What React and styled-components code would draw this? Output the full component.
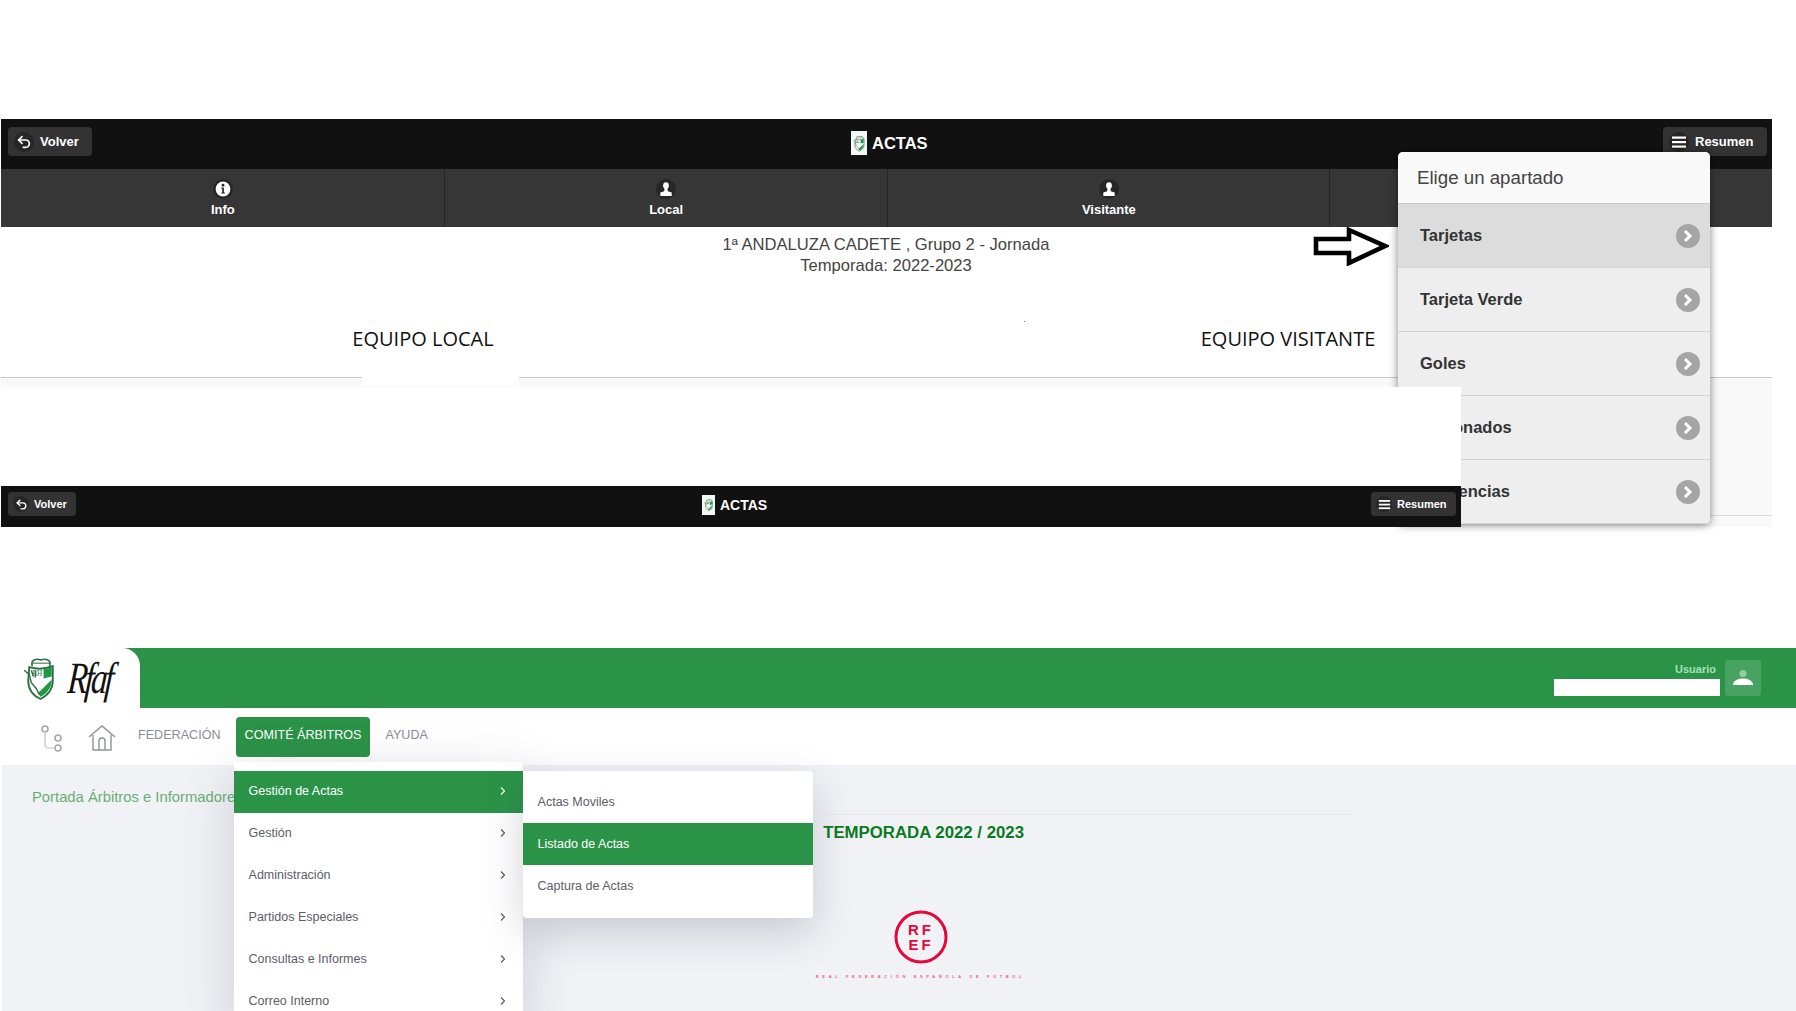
import React from 'react';
import styled, { createGlobalStyle } from 'styled-components';
import { Undo2 } from 'lucide-react';

const GREEN = '#2b9348';

const GlobalStyle = createGlobalStyle`
  html, body {
    margin: 0;
    padding: 0;
    background: #fff;
    font-family: "Liberation Sans", Arial, sans-serif;
  }
  * { box-sizing: border-box; }
`;

const Page = styled.div`
  width: 1796px;
  height: 1011px;
  overflow: hidden;
  padding-top: 119px;
`;

/* captura superior */
const ActasPanel = styled.section`
  position: relative;
  width: 1771px;
  height: 408px;
  margin-left: 1px;
  display: flex;
  flex-direction: column;
`;

const TopBar = styled.div`
  flex: none;
  position: relative;
  height: ${(p) => (p.$small ? 41 : 50)}px;
  background: #111;
  display: flex;
  align-items: flex-start;
  justify-content: space-between;
  padding: ${(p) => (p.$small ? '6px 5px 0 7px' : '8px 5px 0 7px')};
`;

const BarButton = styled.div`
  height: ${(p) => (p.$small ? 24 : 29)}px;
  width: ${(p) => p.$w}px;
  background: #333;
  border-radius: 4px;
  color: #fff;
  display: flex;
  align-items: center;
  gap: ${(p) => (p.$small ? 5 : 6)}px;
  padding-left: ${(p) => (p.$small ? 5 : 6)}px;
  font-size: ${(p) => (p.$small ? 11 : 13)}px;
  font-weight: 700;
`;

const IconDot = styled.span`
  width: ${(p) => (p.$small ? 16 : 20)}px;
  height: ${(p) => (p.$small ? 16 : 20)}px;
  border-radius: 50%;
  background: #262626;
  display: flex;
  align-items: center;
  justify-content: center;
  color: #fff;
  flex: none;
`;

const Brand = styled.div`
  position: absolute;
  left: ${(p) => p.$left}px;
  top: ${(p) => p.$top}px;
  display: flex;
  align-items: center;
  gap: 5px;
  color: #fff;
  font-weight: 700;
  font-size: ${(p) => (p.$small ? 14 : 16.5)}px;
`;

const BrandMark = styled.span`
  display: flex;
  background: #f4f8f4;
  width: ${(p) => (p.$small ? 13 : 16)}px;
  height: ${(p) => (p.$small ? 20 : 24)}px;
  align-items: center;
  justify-content: center;
`;

const Tabs = styled.nav`
  flex: none;
  height: 58px;
  background: #363636;
  display: grid;
  grid-template-columns: repeat(4, 1fr);
`;

const Tab = styled.div`
  border-left: ${(p) => (p.$first ? 'none' : '1px solid #242424')};
  display: flex;
  flex-direction: column;
  align-items: center;
  padding: 10px 0 0 1px;
  gap: 3px;
  color: #fff;
  font-size: 13px;
  font-weight: 700;
  line-height: 15px;
`;

const MatchInfo = styled.div`
  flex: none;
  height: 98px;
  padding-top: 7px;
  text-align: center;
  font-size: 16.6px;
  line-height: 21px;
  color: #444;
  padding-right: 1px;
`;

const Teams = styled.div`
  flex: none;
  height: 52px;
  display: grid;
  grid-template-columns: 844px 886px;
  justify-items: center;
  font-family: "Open Sans", sans-serif;
  font-size: 20px;
  line-height: 28px;
  color: #111;
`;

const Rest = styled.div`
  position: relative;
  flex: 1;
  background: #f9f9f9;
  border-top: 1px solid #c8c8c8;
  padding-top: 137px;
`;

const RestLine = styled.div`
  height: 1px;
  background: #ddd;
`;

const Notch = styled.div`
  position: absolute;
  left: 361px;
  top: -1px;
  width: 157px;
  height: 9px;
  background: #fff;
`;

const Speck = styled.i`
  position: absolute;
  left: 1023px;
  top: 202px;
  width: 1px;
  height: 1px;
  background: #777;
`;

const Arrow = styled.svg`
  position: absolute;
  left: 1312px;
  top: 107px;
`;

const Popup = styled.div`
  position: absolute;
  left: 1397px;
  top: 33px;
  width: 312px;
  height: 372px;
  border-radius: 5px;
  overflow: hidden;
  box-shadow: 0 1px 8px rgba(0, 0, 0, 0.5);
  background: #eee;
`;

const PopupTitle = styled.div`
  height: 52px;
  background: #f9f9f9;
  padding: 0 19px;
  display: flex;
  align-items: center;
  font-size: 18.7px;
  color: #444;
  border-bottom: 1px solid #ccc;
`;

const PopupItem = styled.div`
  height: 64px;
  background: ${(p) => (p.$active ? '#dcdcdc' : '#eee')};
  border-bottom: 1px solid #d4d4d4;
  display: flex;
  align-items: center;
  justify-content: space-between;
  padding: 0 10px 0 22px;
  font-size: 16.5px;
  font-weight: 700;
  color: #333;
`;

const RoundChevron = styled.span`
  width: 24px;
  height: 24px;
  border-radius: 50%;
  background: #a5a5a5;
  display: flex;
  align-items: center;
  justify-content: center;
`;

/* recorte blanco + barra pequeña, pegado encima de lo anterior */
const PastedStrip = styled.div`
  position: absolute;
  left: 0;
  bottom: 0;
  width: 1460px;
  height: 140px;
  padding-top: 99px;
  background: #fff;
`;

/* captura inferior */
const Site = styled.section`
  margin-top: 121px;
`;

const SiteHeader = styled.header`
  height: 60px;
  background: ${GREEN};
  display: flex;
  justify-content: space-between;
`;

const LogoTab = styled.div`
  width: 140px;
  background: #fff;
  border-top-right-radius: 18px;
  display: flex;
  align-items: center;
  padding: 0 0 0 23px;
  gap: 10px;
`;

const LogoScript = styled.span`
  font-family: "Liberation Serif", serif;
  font-style: italic;
  font-size: 33px;
  line-height: 44px;
  letter-spacing: -3px;
  color: #111;
  display: inline-block;
  transform: scaleY(1.35) skewX(-6deg);
`;

const UserArea = styled.div`
  display: flex;
  align-items: flex-start;
  gap: 5px;
  padding: 12px 35px 0 0;
`;

const UserFields = styled.div`
  display: flex;
  flex-direction: column;
  align-items: flex-end;
`;

const UserLabel = styled.span`
  font-size: 11px;
  font-weight: 700;
  line-height: 19px;
  color: #a6e0b4;
  padding-right: 4px;
`;

const UserInput = styled.div`
  width: 166px;
  height: 17px;
  background: #fff;
`;

const Avatar = styled.div`
  width: 36px;
  height: 36px;
  background: rgba(255, 255, 255, 0.14);
  border-radius: 3px;
  display: flex;
  align-items: center;
  justify-content: center;
`;

const MainNav = styled.nav`
  height: 57px;
  background: #fff;
  display: flex;
  align-items: flex-start;
  padding: 9px 0 0 40px;
  font-size: 12.6px;
  color: #8b8d96;
`;

const NavIcon = styled.svg`
  flex: none;
  margin: ${(p) => p.$m};
`;

const NavLink = styled.div`
  position: relative;
  height: 40px;
  line-height: 37px;
  padding: 0 ${(p) => p.$px}px;
  margin-left: ${(p) => p.$ml || 0}px;
  border-radius: 4px;
  background: ${(p) => (p.$active ? GREEN : 'transparent')};
  color: ${(p) => (p.$active ? '#fff' : 'inherit')};
`;

const Dropdown = styled.div`
  position: absolute;
  left: -2px;
  top: 45px;
  width: 289px;
  padding-top: 9px;
  background: #fff;
  box-shadow: 0 12px 50px rgba(60, 60, 90, 0.2);
  z-index: 2;
`;

const SubDropdown = styled.div`
  position: absolute;
  left: 289px;
  top: 9px;
  width: 290px;
  padding: 10px 0 11px;
  background: #fff;
  border-radius: 0 4px 4px 4px;
  box-shadow: 0 14px 40px rgba(60, 60, 90, 0.22);
`;

const MenuRow = styled.div`
  height: 42px;
  display: flex;
  align-items: center;
  justify-content: space-between;
  padding: 0 16px ${(p) => p.$pb}px 15px;
  font-size: 12.5px;
  line-height: 16px;
  background: ${(p) => (p.$active ? GREEN : 'transparent')};
  color: ${(p) => (p.$active ? '#fff' : '#5c5d68')};
`;

const Content = styled.main`
  height: 246px;
  margin-left: 2px;
  background: #f0f2f5;
`;

const Breadcrumb = styled.div`
  height: 49px;
  padding: 22px 0 0 30px;
  font-size: 14.8px;
  line-height: 20px;
  color: #6aae76;
  white-space: nowrap;
`;

const Rule = styled.div`
  width: 527px;
  height: 1px;
  margin-left: 823px;
  background: #e6e8ec;
`;

const SeasonColumn = styled.div`
  width: 207px;
  margin-left: 815px;
  padding-top: 9px;
  display: flex;
  flex-direction: column;
  align-items: center;
`;

const SeasonTitle = styled.h2`
  align-self: flex-end;
  margin: 0;
  font-size: 16.8px;
  line-height: 18px;
  font-weight: 700;
  white-space: nowrap;
  color: #0b7a1f;
`;

const RfefMark = styled.svg`
  margin-top: 68px;
`;

const RfefText = styled.div`
  margin-top: 10px;
  font-size: 4px;
  line-height: 6px;
  font-weight: 700;
  letter-spacing: 3.65px;
  color: #ee5a7c;
  white-space: nowrap;
`;

const Shield = ({ w, h }) => (
  <svg width={w} height={h} viewBox="0 0 34 42">
    <path d="M9 9C7 3 13 1 17 3c5-2 11 0 9 6" fill="none" stroke="#2f6f45" strokeWidth="1.6" />
    <path d="M9 6h17" stroke="#2f6f45" strokeWidth="1" />
    <path d="M6 10c7 2 15 2 23-1v14c0 9-6 15-12 18C10 38 5 32 5 23z" fill="#fff" stroke="#2f6f45" strokeWidth="1.8" />
    <path d="M20 12l8-2v9l-8 2z" fill="#1f9a44" />
    <path d="M28 22c0 8-5 14-11 17l-2-4z" fill="#1f9a44" />
    <path d="M1 13l5 4 2 8 5 6 3 6M8 13l2 6M12 13v7" fill="none" stroke="#2f6f45" strokeWidth="1.4" />
    <text x="9" y="19" fontSize="7" fill="#2f6f45" fontFamily="Liberation Serif, serif">BH</text>
  </svg>
);

const Person = () => (
  <svg width="14" height="15" viewBox="0 0 14 15" fill="#fff">
    <ellipse cx="7" cy="3.6" rx="2.9" ry="3.4" />
    <path d="M5.6 6h2.8l.4 3.2 3.9 1.4V14H1.3v-3.4l3.9-1.4z" />
  </svg>
);

const InfoGlyph = () => (
  <svg width="20" height="20" viewBox="0 0 20 20">
    <circle cx="10" cy="10" r="10" fill="#262626" />
    <circle cx="10" cy="10" r="7.4" fill="#fff" />
    <circle cx="10" cy="6.2" r="1.4" fill="#262626" />
    <path d="M8.2 8.5h2.7v5h1v1H8.2v-1h1v-4h-1z" fill="#262626" />
  </svg>
);

const Bars = ({ s }) => (
  <svg width={s} height={s} viewBox="0 0 16 16" fill="#fff">
    <rect x="1" y="2.5" width="14" height="2.2" />
    <rect x="1" y="7" width="14" height="2.2" />
    <rect x="1" y="11.5" width="14" height="2.2" />
  </svg>
);

const Chevron = ({ color }) => (
  <svg width="8" height="10" viewBox="0 0 8 10" fill="none" stroke={color} strokeWidth="1.1">
    <path d="M2 1.5 5.5 5 2 8.5" />
  </svg>
);

const ActasBar = ({ small }) => (
  <TopBar $small={small}>
    <BarButton $small={small} $w={small ? 68 : 84}>
      <IconDot $small={small}>
        <Undo2 size={small ? 13 : 16} strokeWidth={2.6} />
      </IconDot>
      Volver
    </BarButton>
    <Brand $small={small} $left={small ? 701 : 850} $top={small ? 9 : 12}>
      <BrandMark $small={small}>
        <Shield w={small ? 10 : 13} h={small ? 14 : 17} />
      </BrandMark>
      ACTAS
    </Brand>
    <BarButton $small={small} $w={small ? 85 : 104}>
      <IconDot $small={small}>
        <Bars s={small ? 13 : 16} />
      </IconDot>
      Resumen
    </BarButton>
  </TopBar>
);

const popupItems = ['Tarjetas', 'Tarjeta Verde', 'Goles', 'Lesionados', 'Incidencias'];
const mainMenu = ['Gestión de Actas', 'Gestión', 'Administración', 'Partidos Especiales', 'Consultas e Informes', 'Correo Interno'];
const subMenu = ['Actas Moviles', 'Listado de Actas', 'Captura de Actas'];

const App = () => {
  return (
    <Page>
      <GlobalStyle />
      <ActasPanel>
        <ActasBar />
        <Tabs>
          <Tab $first>
            <InfoGlyph />
            Info
          </Tab>
          <Tab>
            <IconDot><Person /></IconDot>
            Local
          </Tab>
          <Tab>
            <IconDot><Person /></IconDot>
            Visitante
          </Tab>
          <Tab />
        </Tabs>
        <MatchInfo>
          1ª ANDALUZA CADETE , Grupo 2 - Jornada
          <br />
          Temporada: 2022-2023
        </MatchInfo>
        <Teams>
          <span>EQUIPO LOCAL</span>
          <span>EQUIPO VISITANTE</span>
        </Teams>
        <Rest>
          <Notch />
          <RestLine />
        </Rest>
        <Speck />
        <Arrow width="76" height="40" viewBox="0 0 76 40">
          <path d="M3 13h33V4l36 16-36 17v-10H3z" fill="#fff" stroke="#000" strokeWidth="4.6" />
        </Arrow>
        <Popup>
          <PopupTitle>Elige un apartado</PopupTitle>
          {popupItems.map((item, i) => (
            <PopupItem key={item} $active={i === 0}>
              {item}
              <RoundChevron>
                <svg width="12" height="14" viewBox="0 0 12 14" fill="none" stroke="#fff" strokeWidth="3">
                  <path d="M3 2l5 5-5 5" />
                </svg>
              </RoundChevron>
            </PopupItem>
          ))}
        </Popup>
        <PastedStrip>
          <ActasBar small />
        </PastedStrip>
      </ActasPanel>

      <Site>
        <SiteHeader>
          <LogoTab>
            <Shield w={35} h={43} />
            <LogoScript>Rfaf</LogoScript>
          </LogoTab>
          <UserArea>
            <UserFields>
              <UserLabel>Usuario</UserLabel>
              <UserInput />
            </UserFields>
            <Avatar>
              <svg width="22" height="22" viewBox="0 0 22 22">
                <circle cx="11" cy="6.5" r="3.6" fill="#8fcfa0" />
                <path d="M1 18c0-4 4.500-6.500 10-6.500S21 14 21 18z" fill="#fff" />
              </svg>
            </Avatar>
          </UserArea>
        </SiteHeader>
        <MainNav>
          <NavIcon $m="8px 0 0 0" width="24" height="28" viewBox="0 0 24 28" fill="none" stroke="#a4a7b0" strokeWidth="1.6">
            <circle cx="5" cy="4" r="3" />
            <circle cx="18" cy="13" r="3" />
            <circle cx="18" cy="23" r="3" />
            <path d="M5 7v12q0 4 4 4h6" stroke="#d0d2d8" />
          </NavIcon>
          <NavIcon $m="8px 0 0 24px" width="28" height="26" viewBox="0 0 28 26" fill="none" stroke="#8f929c" strokeWidth="1.4">
            <path d="M1 12 14 1l13 11" />
            <path d="M5 10v15h18V10" />
            <path d="M11 25v-9a3 3 0 0 1 6 0v9" />
          </NavIcon>
          <NavLink $px={0} $ml={22}>FEDERACIÓN</NavLink>
          <NavLink $px={9} $ml={15} $active>
            COMITÉ ÁRBITROS
            <Dropdown>
              {mainMenu.map((item, i) => (
                <MenuRow key={item} $active={i === 0} $pb={2}>
                  {item}
                  <Chevron color={i === 0 ? '#fff' : '#555'} />
                </MenuRow>
              ))}
              <SubDropdown>
                {subMenu.map((item, i) => (
                  <MenuRow key={item} $active={i === 1} $pb={0}>
                    {item}
                  </MenuRow>
                ))}
              </SubDropdown>
            </Dropdown>
          </NavLink>
          <NavLink $px={0} $ml={15}>AYUDA</NavLink>
        </MainNav>
        <Content>
          <Breadcrumb>Portada Árbitros e Informadores</Breadcrumb>
          <Rule />
          <SeasonColumn>
            <SeasonTitle>TEMPORADA 2022 / 2023</SeasonTitle>
            <RfefMark width="54" height="54" viewBox="0 0 54 54">
              <circle cx="27" cy="27" r="25" fill="none" stroke="#e5083a" strokeWidth="3" />
              <text x="27" y="25" textAnchor="middle" fontFamily="Liberation Sans, sans-serif" fontWeight="700" fontSize="15" letterSpacing="3" fill="#e5083a">RF</text>
              <text x="27" y="40" textAnchor="middle" fontFamily="Liberation Sans, sans-serif" fontWeight="700" fontSize="15" letterSpacing="3" fill="#e5083a">EF</text>
            </RfefMark>
            <RfefText>REAL FEDERACIÓN ESPAÑOLA DE FÚTBOL</RfefText>
          </SeasonColumn>
        </Content>
      </Site>
    </Page>
  );
};

export default App;
